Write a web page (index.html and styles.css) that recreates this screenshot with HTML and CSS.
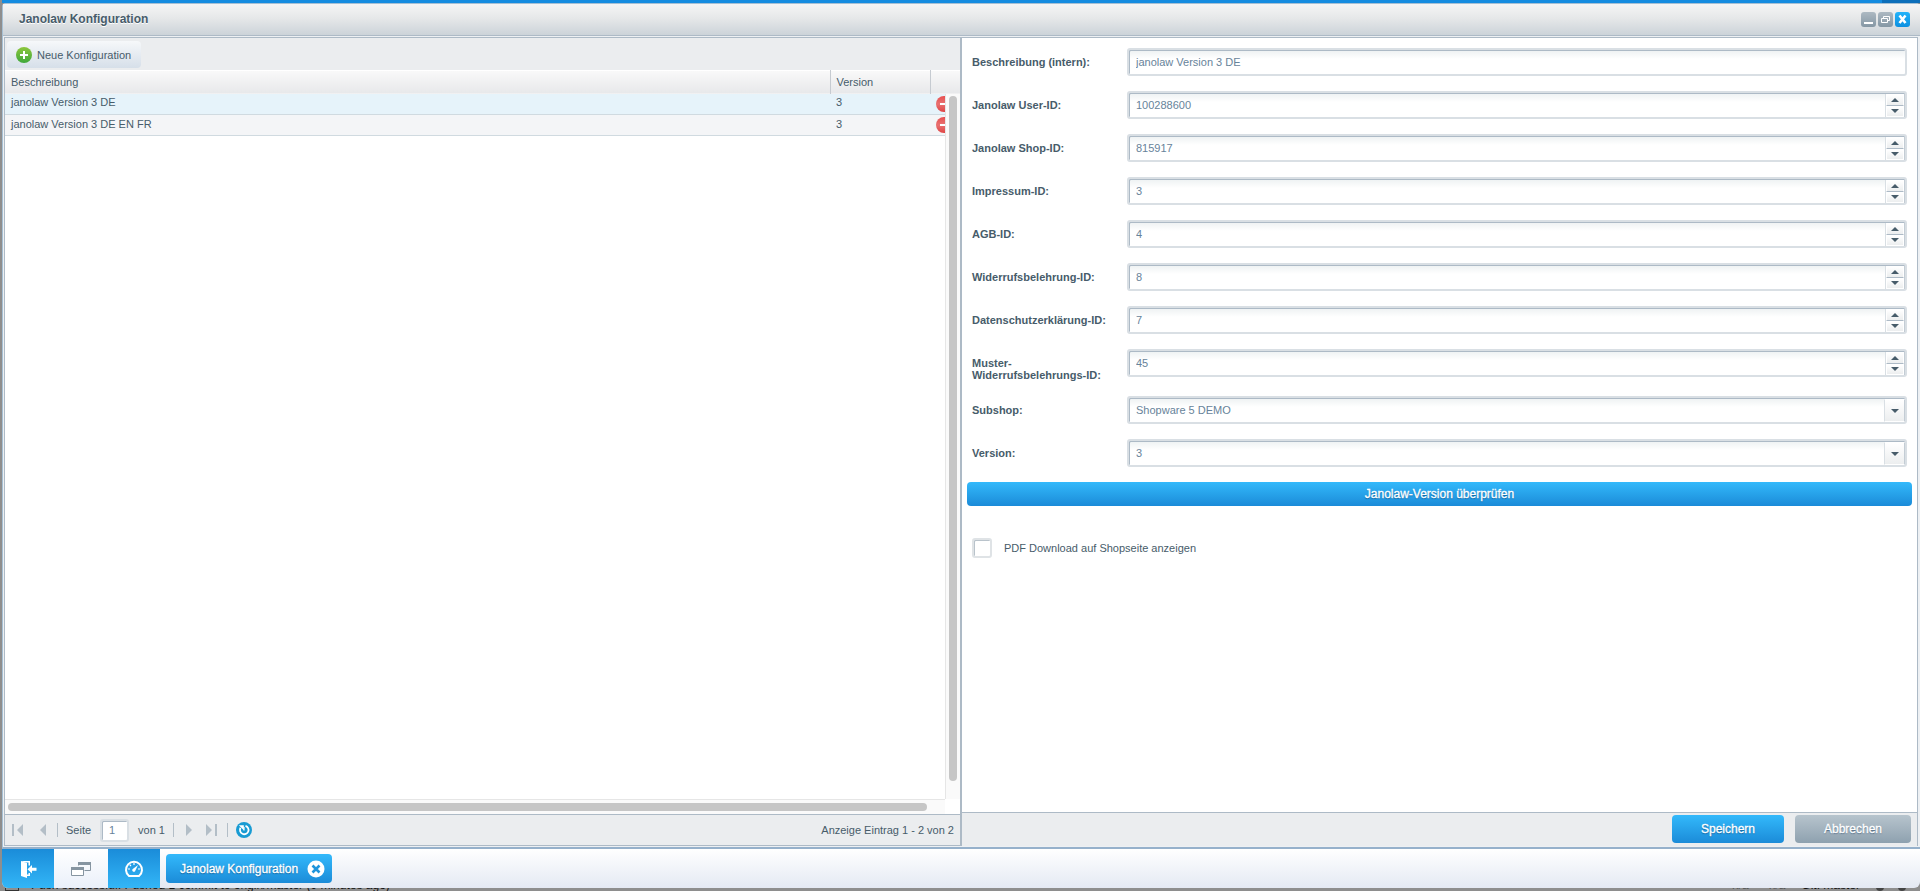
FILE: index.html
```html
<!DOCTYPE html>
<html lang="de">
<head>
<meta charset="utf-8">
<title>Janolaw Konfiguration</title>
<link rel="stylesheet" href="styles.css">
</head>
<body>
<div class="topbar"></div>
<main class="window">
  <header class="window-head">
    <h1 class="window-title">Janolaw Konfiguration</h1>
    <div class="tools">
      <button class="tool" aria-label="Minimieren"><svg width="15" height="15" viewBox="0 0 15 15"><path d="M3 10h9v2H3z" fill="#fff"/></svg></button>
      <button class="tool" aria-label="Wiederherstellen"><svg width="15" height="15" viewBox="0 0 15 15" fill="none" stroke="#fff"><path d="M5.500 6V4.500h6V8.500H9.500M3.500 6.500h6v4h-6z"/></svg></button>
      <button class="tool tool-close" aria-label="Schließen"><svg width="15" height="15" viewBox="0 0 15 15"><path d="M4.500 3.500l6 7.500M10.500 3.500l-6 7.500" stroke="#fff" stroke-width="2.600"/></svg></button>
    </div>
  </header>
  <div class="window-body">
    <section class="panel list">
      <div class="toolbar">
        <button class="add"><svg width="16" height="16" viewBox="0 0 16 16"><defs><linearGradient id="green" x2="0" y2="1"><stop stop-color="#8cc63c"/><stop offset="1" stop-color="#3fa83c"/></linearGradient></defs><circle cx="8" cy="8" r="8" fill="url(#green)"/><path d="M8 4v8M4 8h8" stroke="#fff" stroke-width="2"/></svg>Neue Konfiguration</button>
      </div>
      <table class="grid grid-head">
        <colgroup><col><col class="col-version"><col class="col-action"></colgroup>
        <thead><tr><th>Beschreibung</th><th>Version</th><th aria-label="Aktion"></th></tr></thead>
      </table>
      <div class="scroller">
        <div class="viewport">
          <table class="grid grid-rows">
            <colgroup><col><col class="col-version"><col class="col-action"></colgroup>
            <tbody>
              <tr class="selected"><td>janolaw Version 3 DE</td><td>3</td><td class="action"><button class="delete" aria-label="Löschen"><svg width="16" height="16" viewBox="0 0 16 16"><defs><linearGradient id="red" x2="0" y2="1"><stop stop-color="#e84f4f"/><stop offset=".5" stop-color="#e87272"/><stop offset="1" stop-color="#e04444"/></linearGradient></defs><circle cx="8" cy="8" r="8" fill="url(#red)"/><path d="M4 8h8" stroke="#fff" stroke-width="2"/></svg></button></td></tr>
              <tr class="alt"><td>janolaw Version 3 DE EN FR</td><td>3</td><td class="action"><button class="delete" aria-label="Löschen"><svg width="16" height="16" viewBox="0 0 16 16"><circle cx="8" cy="8" r="8" fill="url(#red)"/><path d="M4 8h8" stroke="#fff" stroke-width="2"/></svg></button></td></tr>
            </tbody>
          </table>
        </div>
        <div class="vbar"><div class="vthumb"></div></div>
        <div class="hbar"><div class="hthumb"></div></div>
      </div>
      <footer class="pager">
        <button class="page-btn" aria-label="Erste Seite"><svg width="12" height="12" viewBox="0 0 12 12" fill="#b3bec7"><path d="M0 0h2v12H0zM11 0v12L5 6z"/></svg></button>
        <button class="page-btn page-prev" aria-label="Vorherige Seite"><svg width="6" height="12" viewBox="0 0 6 12" fill="#b3bec7"><path d="M6 0v12L0 6z"/></svg></button>
        <span class="sep"></span>
        <label class="page-label" for="page">Seite</label>
        <input class="page-input" id="page" type="text" value="1">
        <span class="page-total">von 1</span>
        <span class="sep"></span>
        <button class="page-btn page-next" aria-label="Nächste Seite"><svg width="6" height="12" viewBox="0 0 6 12" fill="#b3bec7"><path d="M0 0v12l6-6z"/></svg></button>
        <button class="page-btn page-last" aria-label="Letzte Seite"><svg width="12" height="12" viewBox="0 0 12 12" fill="#b3bec7"><path d="M0 0v12l6-6zM9 0h2v12H9z"/></svg></button>
        <span class="sep"></span>
        <button class="page-btn refresh" aria-label="Aktualisieren"><svg width="16" height="16" viewBox="0 0 16 16"><circle cx="8" cy="8" r="8" fill="#189bd3"/><path d="M9.500 3.800a4.300 4.300 0 1 1-5 2" fill="none" stroke="#fff" stroke-width="1.800"/><path d="M2.800 3.200h5v5z" fill="#fff"/><path d="M8 5v3.500" stroke="#fff" stroke-width="1.200"/></svg></button>
        <span class="page-info">Anzeige Eintrag 1 - 2 von 2</span>
      </footer>
    </section>
    <section class="panel detail">
      <form class="form">
        <div class="row"><label for="f1">Beschreibung (intern):</label><div class="field"><input id="f1" type="text" value="janolaw Version 3 DE"></div></div>
        <div class="row"><label for="f2">Janolaw User-ID:</label><div class="field"><input id="f2" type="number" value="100288600"><div class="spin"><button type="button" class="up" aria-label="Erhöhen"></button><button type="button" class="down" aria-label="Verringern"></button></div></div></div>
        <div class="row"><label for="f3">Janolaw Shop-ID:</label><div class="field"><input id="f3" type="number" value="815917"><div class="spin"><button type="button" class="up" aria-label="Erhöhen"></button><button type="button" class="down" aria-label="Verringern"></button></div></div></div>
        <div class="row"><label for="f4">Impressum-ID:</label><div class="field"><input id="f4" type="number" value="3"><div class="spin"><button type="button" class="up" aria-label="Erhöhen"></button><button type="button" class="down" aria-label="Verringern"></button></div></div></div>
        <div class="row"><label for="f5">AGB-ID:</label><div class="field"><input id="f5" type="number" value="4"><div class="spin"><button type="button" class="up" aria-label="Erhöhen"></button><button type="button" class="down" aria-label="Verringern"></button></div></div></div>
        <div class="row"><label for="f6">Widerrufsbelehrung-ID:</label><div class="field"><input id="f6" type="number" value="8"><div class="spin"><button type="button" class="up" aria-label="Erhöhen"></button><button type="button" class="down" aria-label="Verringern"></button></div></div></div>
        <div class="row"><label for="f7">Datenschutzerklärung-ID:</label><div class="field"><input id="f7" type="number" value="7"><div class="spin"><button type="button" class="up" aria-label="Erhöhen"></button><button type="button" class="down" aria-label="Verringern"></button></div></div></div>
        <div class="row"><label for="f8">Muster-<br>Widerrufsbelehrungs-ID:</label><div class="field"><input id="f8" type="number" value="45"><div class="spin"><button type="button" class="up" aria-label="Erhöhen"></button><button type="button" class="down" aria-label="Verringern"></button></div></div></div>
        <div class="row"><label for="f9">Subshop:</label><div class="field"><select id="f9"><option>Shopware 5 DEMO</option></select><span class="trigger"></span></div></div>
        <div class="row"><label for="f10">Version:</label><div class="field"><select id="f10"><option>3</option></select><span class="trigger"></span></div></div>
        <button type="button" class="primary check-version">Janolaw-Version überprüfen</button>
        <label class="check"><input type="checkbox">PDF Download auf Shopseite anzeigen</label>
      </form>
      <footer class="actions">
        <button class="primary save">Speichern</button>
        <button class="secondary cancel">Abbrechen</button>
      </footer>
    </section>
  </div>
</main>
<nav class="taskbar">
  <button class="launch" aria-label="Abmelden"><svg width="18" height="20" viewBox="0 0 18 20"><path d="M2 2h9v4.500H9.500V3.500H6zM9.500 14H11v3H8v-1.500h1.500z" fill="#fff"/><path d="M2 2l6 2v15l-6-2z" fill="#fff"/><path d="M8.500 10.200L13 6v2.700h4.500v3H13v2.700z" fill="#fff"/></svg></button>
  <button class="launch launch-light" aria-label="Fenster"><svg width="20" height="16" viewBox="0 0 20 16" fill="none" stroke="#8695a1"><path d="M7.500 4.500v-3h12v8h-6"/><path d="M7 1h13v3H7z" fill="#8695a1" stroke="none"/><path d="M.5 6.500h12v8H.5z" fill="#fff"/><path d="M0 6h13v3H0z" fill="#8695a1" stroke="none"/></svg></button>
  <button class="launch" aria-label="Übersicht"><svg width="20" height="20" viewBox="0 0 20 20"><path d="M5 17a8 8 0 1 1 10 0z" fill="none" stroke="#fff" stroke-width="2" stroke-linejoin="round"/><path d="M10 4v2M5.700 5.700L7 7M4 10h2M14 10h2" stroke="#fff" stroke-width="1.200"/><path d="M14 6l-2.600 5.400a1.600 1.600 0 1 1-2.300-1.600z" fill="#fff"/></svg></button>
  <button class="primary task">Janolaw Konfiguration<svg width="18" height="18" viewBox="0 0 18 18"><circle cx="9" cy="9" r="8.500" fill="#fff"/><path d="M5.500 5.500l7 7M12.500 5.500l-7 7" stroke="#1f95dc" stroke-width="2.600"/></svg></button>
</nav>
<div class="status"><span class="status-icon"></span><span>Push successful: Pushed 1 commit to origin/master (9 minutes ago)</span><span class="status-right">n/a</span><span class="status-na">n/a</span><span class="status-git">Git: master</span><span class="status-dot"></span><span class="status-dot"></span></div>
</body>
</html>
```
FILE: styles.css
```css
* { box-sizing: border-box; }

body {
  margin: 0;
  min-height: 100vh;
  display: flex;
  flex-direction: column;
  padding-left: 2px;
  background: #8e8e8e;
  color: #475c6a;
  font: 11px/14px "Liberation Sans", Arial, sans-serif;
}

button, input, select {
  font: inherit;
  color: inherit;
  margin: 0;
  padding: 0;
  border: 0;
  background: none;
}

svg { display: block; }

.topbar { height: 3px; background: linear-gradient(90deg, #158ce0 98%, #0d6fba 98%); }

.window {
  flex: 1;
  display: flex;
  flex-direction: column;
  padding: 0 2px 1px 1px;
  border: 1px solid #a6c0d4;
  border-right-width: 0;
  border-bottom: 2px solid #96b1cb;
  border-radius: 4px 4px 0 0;
  background: #edf0f3;
}

.window-head {
  display: flex;
  align-items: center;
  justify-content: space-between;
  height: 32px;
  margin: 0 -2px 1px -1px;
  padding: 0 10px 0 16px;
  border-bottom: 1px solid #adbac6;
  background: linear-gradient(#f5f5f5, #e6e8e9 45%, #ccd3d9);
}

.window-title {
  margin: 0;
  padding-bottom: 2px;
  font-size: 12px;
  line-height: 16px;
  text-shadow: 0 1px 0 #fff;
}

.tools { display: flex; gap: 2px; }
.tool { width: 15px; height: 15px; border-radius: 3px; background: linear-gradient(#adb9c2, #8597a4); }
.tool-close { background: linear-gradient(#23b4fa, #0c8fe0); }

.window-body {
  flex: 1;
  display: flex;
  border: 1px solid #adbac6;
  border-bottom: 0;
}

.panel { flex: 1 1 0; min-width: 0; display: flex; flex-direction: column; }
.list { border-right: 1px solid #adbac6; background: #fff; }
.detail { border-left: 1px solid #adbac6; background: #fff; }

.toolbar { height: 32px; padding: 3px 2px; background: #ebedef; }

.add {
  display: flex;
  align-items: center;
  gap: 5px;
  height: 27px;
  padding: 0 10px 0 9px;
  border-radius: 4px;
  background: linear-gradient(#f6f8fa, #d6dfe9);
}

.grid { width: 100%; table-layout: fixed; border-collapse: collapse; }
.grid th, .grid td { padding: 0 6px; text-align: left; font-weight: normal; }
.col-version { width: 100px; }
.col-action { width: 30px; }

.grid-head { background: linear-gradient(#f9f9f9, #e7e8ea); border-top: 1px solid #fff; }
.grid-head th { height: 23px; }
.grid-head th + th { border-left: 1px solid #c6cbd1; }

.scroller {
  flex: 1;
  display: grid;
  grid-template-columns: 1fr 15px;
  grid-template-rows: 1fr 15px;
}

.viewport { overflow: hidden; }
.grid-rows { width: calc(100% + 15px); }
.grid-rows td { height: 21px; padding-bottom: 3px; border-bottom: 1px solid #d0dae0; }
.grid-rows .action { padding: 0 6px; }
.selected { background: #e6f3fa; }
.alt { background: #f4f5f7; }
.delete { display: block; }

.vbar { padding: 2px 3px 18px; border-left: 1px solid #e6e6e6; background: #fafafa; }
.vthumb { width: 8px; height: 100%; border-radius: 4px; background: #c6c6c6; }
.hbar { padding: 3px 18px 0 3px; border-top: 1px solid #e6e6e6; background: #fafafa; }
.hthumb { height: 8px; border-radius: 4px; background: #c6c6c6; }

.pager {
  display: flex;
  align-items: center;
  height: 32px;
  padding: 0 6px 0 7px;
  border-top: 1px solid #adbac6;
  border-bottom: 1px solid #adbac6;
  background: #ebedef;
}

.page-prev { margin-left: 16px; margin-right: 11px; }
.page-next { margin: 0 14px 0 12px; }
.page-last { margin-right: 9px; }
.refresh { margin-left: 8px; }
.sep { width: 1px; height: 14px; background: #b3bec7; }
.page-label { margin: 0 9px 0 8px; }
.page-input {
  width: 29px;
  height: 23px;
  padding-left: 7px;
  border: 2px solid #d9dfe4;
  border-radius: 3px;
  background: #fff;
  box-shadow: inset 1px 1px 0 #adbac6;
  color: #67839a;
}
.page-total { margin: 0 8px 0 9px; }
.page-info { margin-left: auto; }

.form { flex: 1; padding: 10px 5px; }

.row { display: flex; align-items: flex-start; margin: 0 5px 15px; }
.row label { width: 155px; padding-top: 8px; font-weight: bold; line-height: 12px; }

.field {
  flex: 1;
  display: flex;
  height: 28px;
  border: 2px solid #d9dfe4;
  border-radius: 3px;
  background: linear-gradient(#edf1f2, #fff 9px);
  box-shadow: inset 1px 1px 0 #adbac6;
}

.field input, .field select {
  flex: 1;
  min-width: 0;
  padding-left: 7px;
  appearance: none;
  -moz-appearance: textfield;
  color: #67839a;
}

.field input::-webkit-inner-spin-button { display: none; }

.spin {
  display: grid;
  grid-template-rows: 1fr 1fr;
  width: 20px;
  margin-top: 1px;
  border-left: 1px solid #d9dfe4;
  border-right: 1px solid #c3ccd4;
}

.up, .down { display: grid; place-items: center; background: linear-gradient(#fff, #eceeef); border: 1px solid #fff; }
.up { border-bottom-color: #adbac6; }
.up::after { content: ""; border: 4px solid transparent; border-top: 0; border-bottom: 4px solid #475c6a; }
.down::after, .trigger::after { content: ""; border: 4px solid transparent; border-bottom: 0; border-top: 4px solid #475c6a; }

.trigger {
  display: grid;
  place-items: center;
  width: 21px;
  margin-top: 1px;
  border: 1px solid #fff;
  border-left-color: #d9dfe4;
  border-right-color: #c3ccd4;
  background: linear-gradient(#fff, #eceeef);
  pointer-events: none;
}

.primary, .secondary {
  border-radius: 4px;
  color: #fff;
  font-size: 12px;
  text-shadow: 0 1px 1px rgba(0, 40, 80, 0.5);
  -webkit-text-stroke: 0.3px #fff;
}
.primary { background: linear-gradient(#33b9fb, #1b8bd8); }
.secondary { background: linear-gradient(#b7c4cd, #8ea1af); }

.check-version { display: block; width: 100%; height: 24px; }

.check { display: flex; align-items: center; gap: 12px; margin: 32px 5px 0; }
.check input {
  width: 20px;
  height: 20px;
  appearance: none;
  border: 2px solid #dfe3e6;
  border-radius: 3px;
  background: #fff;
  box-shadow: inset 1px 1px 0 #b9c3cb;
}

.actions {
  display: flex;
  justify-content: flex-end;
  gap: 11px;
  height: 34px;
  padding: 2px 6px 0;
  border-top: 1px solid #adbac6;
  background: #ebedef;
}
.save { width: 112px; height: 28px; }
.cancel { width: 116px; height: 28px; }

.taskbar {
  display: flex;
  align-items: center;
  height: 39px;
  overflow: hidden;
  border-radius: 0 0 6px 6px;
  background: linear-gradient(#fff, #e4e9f3);
}
.launch {
  display: grid;
  place-items: center;
  width: 52px;
  height: 39px;
  background: linear-gradient(#1a8cd9, #33b6f7);
}
.launch-light { width: 54px; background: linear-gradient(#fff, #eaf0fa); }
.task { display: flex; align-items: center; gap: 9px; height: 29px; margin-left: 6px; padding: 0 7px 0 14px; }

.status {
  display: flex;
  align-items: flex-end;
  height: 3px;
  overflow: hidden;
  color: #111;
  font-size: 12px;
  line-height: 12px;
  white-space: nowrap;
}
.status-icon { width: 14px; height: 14px; margin: 0 12px 0 3px; border: 1px solid #333; }
.status-right { margin-left: auto; color: #555; }
.status-na { margin: 0 16px 0 20px; color: #555; }
.status-git { margin-right: 16px; }
.status-dot { width: 8px; height: 8px; margin-right: 14px; border-radius: 4px; background: #444; }
```
